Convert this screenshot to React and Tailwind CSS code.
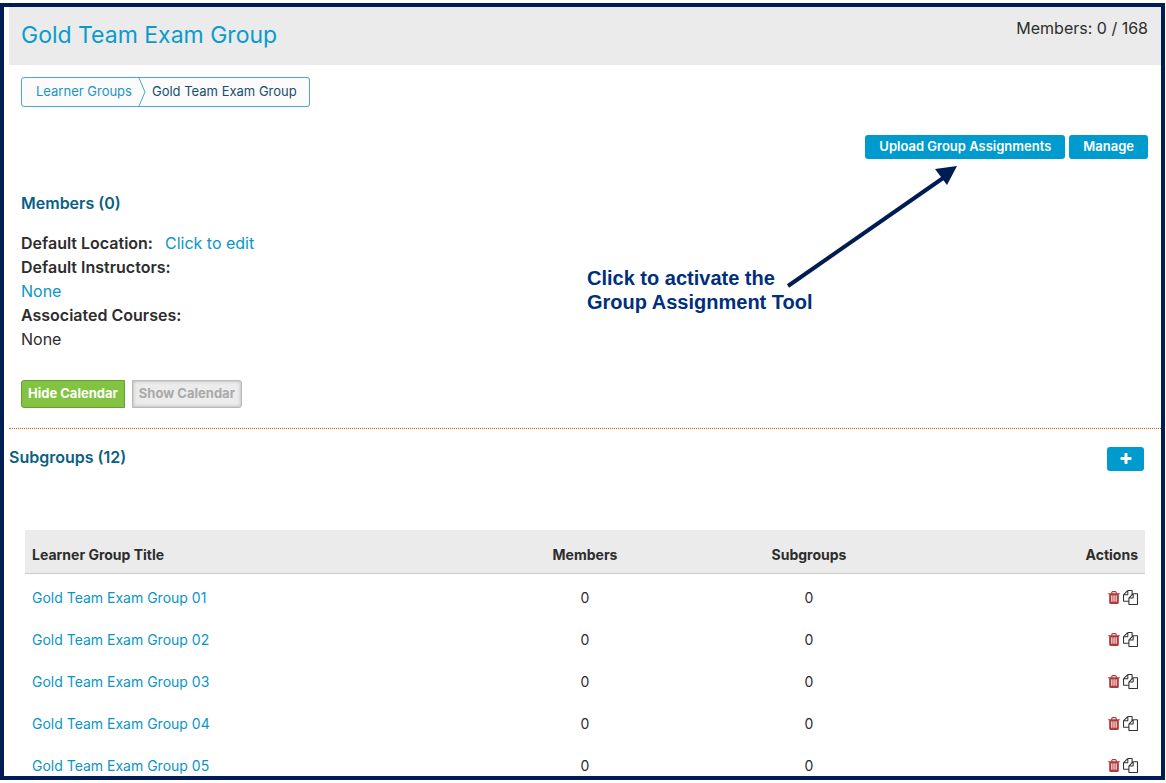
import React from "react";

const groups = ["01", "02", "03", "04", "05"].map((n) => ({
  title: `Gold Team Exam Group ${n}`,
  members: 0,
  subgroups: 0,
}));

function TrashIcon() {
  return (
    <svg viewBox="192 0 1408 1792" className="h-[15px] w-3 fill-[#b03a3a]" aria-hidden="true">
      <path d="M704 1376v-704q0-14-9-23t-23-9h-64q-14 0-23 9t-9 23v704q0 14 9 23t23 9h64q14 0 23-9t9-23zm256 0v-704q0-14-9-23t-23-9h-64q-14 0-23 9t-9 23v704q0 14 9 23t23 9h64q14 0 23-9t9-23zm256 0v-704q0-14-9-23t-23-9h-64q-14 0-23 9t-9 23v704q0 14 9 23t23 9h64q14 0 23-9t9-23zm-544-992h448l-48-117q-7-9-17-11h-317q-10 2-17 11zm928 32v64q0 14-9 23t-23 9h-96v948q0 83-47 143.500t-113 60.500h-832q-66 0-113-58.500t-47-141.500v-952h-96q-14 0-23-9t-9-23v-64q0-14 9-23t23-9h309l70-167q15-37 54-63t79-26h320q40 0 79 26t54 63l70 167h309q14 0 23 9t9 23z" />
    </svg>
  );
}

function CopyIcon() {
  return (
    <svg viewBox="0 0 1792 1792" className="size-[15px] fill-[#333333]" aria-hidden="true">
      <path d="M1696 384q40 0 68 28t28 68v1216q0 40-28 68t-68 28h-960q-40 0-68-28t-28-68v-288h-544q-40 0-68-28t-28-68v-672q0-40 20-88t48-76l408-408q28-28 76-48t88-20h416q40 0 68 28t28 68v328q68-40 128-40h416zm-544 213l-299 299h299v-299zm-640-384l-299 299h299v-299zm196 647l316-316v-416h-384v416q0 40-28 68t-68 28h-416v640h512v-256q0-40 20-88t48-76zm956 804v-1152h-384v416q0 40-28 68t-68 28h-416v640h896z" />
    </svg>
  );
}

function PlusIcon() {
  return (
    <svg viewBox="0 0 1792 1792" className="size-[14px] fill-white" aria-hidden="true">
      <path d="M1600 736v192q0 40-28 68t-68 28h-416v416q0 40-28 68t-68 28h-192q-40 0-68-28t-28-68v-416h-416q-40 0-68-28t-28-68v-192q0-40 28-68t68-28h416v-416q0-40 28-68t68-28h192q40 0 68 28t28 68v416h416q40 0 68 28t28 68z" />
    </svg>
  );
}

function Header() {
  return (
    <header className="flex h-[58px] items-start justify-between bg-[#ebebeb] pl-3 pr-[13px]">
      <h1 className="pt-3 text-[23px] leading-8 text-[#0a9bcd]">Gold Team Exam Group</h1>
      <p className="pt-[9px] text-base">Members: 0 / 168</p>
    </header>
  );
}

function Breadcrumb() {
  return (
    <nav
      aria-label="Breadcrumb"
      className="mt-3 ml-3 flex h-[30px] w-fit items-center rounded-[3px] border border-[#4aa9d2] bg-[#fbfbfb] pr-3 pl-[14px] text-[13px]"
    >
      <a href="#groups" className="text-[#1a95c4]">Learner Groups</a>
      <svg viewBox="0 0 8 28" className="mx-[6px] h-7 w-2 fill-none stroke-[#4aa9d2]" aria-hidden="true">
        <path d="M1 0L7 14L1 28" />
      </svg>
      <span className="text-[#17506e]">Gold Team Exam Group</span>
    </nav>
  );
}

function Callout() {
  return (
    <div className="pointer-events-none absolute top-[30px] right-[190px] h-[150px] w-[384px]">
      <p className="absolute top-[101px] left-0 font-['Liberation_Sans',Arial,sans-serif] text-xl leading-6 font-bold whitespace-nowrap text-[#002f7b]">
        Click to activate the
        <br />
        Group Assignment Tool
      </p>
      <svg viewBox="0 0 384 150" className="absolute inset-0 h-[150px] w-[384px]" aria-hidden="true">
        <path d="M201 121L359 11" className="fill-none stroke-[#001c54] stroke-4" />
        <path d="M370 1L348 4L360 20Z" className="fill-[#001c54]" />
      </svg>
    </div>
  );
}

function Details() {
  return (
    <section className="pl-3">
      <h2 className="mt-8 text-base leading-6 font-semibold text-[#0b5f85]">Members (0)</h2>
      <dl className="mt-4 text-base leading-6">
        <div className="flex gap-3">
          <dt className="font-semibold">Default Location:</dt>
          <dd><a href="#location" className="text-[#0a95c8]">Click to edit</a></dd>
        </div>
        <dt className="font-semibold">Default Instructors:</dt>
        <dd><a href="#instructors" className="text-[#0a95c8]">None</a></dd>
        <dt className="font-semibold">Associated Courses:</dt>
        <dd>None</dd>
      </dl>
      <div className="mt-[29px] flex gap-[7px] text-[13px] font-bold">
        <button type="button" className="h-7 rounded-l-[3px] border border-[#6a9e35] bg-[#82c341] px-[6px] text-white">
          Hide Calendar
        </button>
        <button type="button" className="h-7 rounded-r-[3px] border border-[#b9b9b9] bg-[#ececec] px-[6px] text-[#a9a9a9] shadow-[inset_0_0_3px_1px_#c4c4c4]">
          Show Calendar
        </button>
      </div>
    </section>
  );
}

function GroupTable() {
  return (
    <table className="w-full table-fixed text-sm">
      <thead>
        <tr className="h-[43px] border-b border-[#cccccc] bg-[#ebebeb]">
          <th className="w-2/5 px-[7px] pt-2 text-left font-bold">Learner Group Title</th>
          <th className="w-1/5 pt-2 text-center font-bold">Members</th>
          <th className="w-1/5 pt-2 text-center font-bold">Subgroups</th>
          <th className="w-1/5 px-[7px] pt-2 text-right font-bold">Actions</th>
        </tr>
      </thead>
      <tbody>
        {groups.map((g) => (
          <tr key={g.title} className="h-[42px]">
            <td className="px-[7px] pt-2"><a href="#group" className="text-[#0a95c8]">{g.title}</a></td>
            <td className="pt-2 text-center">{g.members}</td>
            <td className="pt-2 text-center">{g.subgroups}</td>
            <td className="px-[7px] pt-[6px]">
              <div className="flex items-center justify-end gap-[3px]">
                <button type="button" aria-label="Delete group"><TrashIcon /></button>
                <button type="button" aria-label="Copy group"><CopyIcon /></button>
              </div>
            </td>
          </tr>
        ))}
      </tbody>
    </table>
  );
}

export default function App() {
  return (
    <div className="h-screen bg-white pt-[3px] pr-px pb-[3px] font-[Inter,'Noto_Sans',sans-serif] text-[#2d2d2d]">
      <main className="h-full overflow-hidden border-4 border-[#001c54] pl-[5px]">
        <Header />
        <Breadcrumb />
        <div className="relative mt-7">
          <div className="flex justify-end gap-1 pr-[13px] text-[13px] font-semibold text-white">
            <button type="button" className="h-6 rounded-[3px] bg-[#009bce] px-[14px]">Upload Group Assignments</button>
            <button type="button" className="h-6 rounded-[3px] bg-[#009bce] px-[14px]">Manage</button>
          </div>
          <Details />
          <Callout />
        </div>
        <section className="mt-5 border-t border-dotted border-[#cc6600]">
          <div className="flex items-start justify-between pt-4 pr-[17px]">
            <h2 className="text-base leading-6 font-semibold text-[#0b5f85]">Subgroups (12)</h2>
            <button type="button" aria-label="Add subgroup" className="mt-[2px] flex h-6 w-[37px] items-center justify-center rounded-[3px] bg-[#009bce]">
              <PlusIcon />
            </button>
          </div>
          <div className="mt-[59px] pr-4 pl-4">
            <GroupTable />
          </div>
        </section>
      </main>
    </div>
  );
}
